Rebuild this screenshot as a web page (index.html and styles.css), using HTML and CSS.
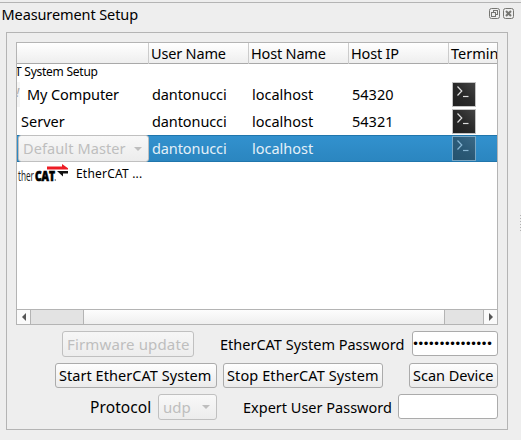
FILE: index.html
```html
<!DOCTYPE html>
<html lang="en">
<head>
<meta charset="utf-8">
<title>Measurement Setup</title>
<link rel="stylesheet" href="styles.css">
</head>
<body>
<svg width="0" height="0" class="defs">
  <defs>
    <linearGradient id="tg" x1="0" y1="1" x2="1" y2="0"><stop offset="0" stop-color="#202020"/><stop offset=".5" stop-color="#292929"/><stop offset="1" stop-color="#444"/></linearGradient>
    <symbol id="term" viewBox="0 0 24 25">
      <rect width="24" height="25" fill="#c3c3c3"/>
      <rect x="1" y="1" width="22" height="23" fill="url(#tg)"/>
      <path d="M5.5 4.5 L9.8 9 L5.5 13.5" fill="none" stroke="#ddd" stroke-width="1.2"/>
      <path d="M11 14.5H16.5" stroke="#ddd" stroke-width="1.2"/>
    </symbol>
  </defs>
</svg>
<div class="dock">
  <header class="title"><span class="t-title">Measurement Setup</span>
    <svg class="controls" width="26" height="12" viewBox="0 0 26 12" fill="none" stroke="#767672">
      <rect x=".5" y=".5" width="10" height="10" rx="2"/>
      <rect x="4.5" y="2.5" width="4" height="4"/><rect x="2.5" y="4.5" width="4" height="4" fill="#eee"/>
      <rect x="14.5" y=".5" width="10" height="10" rx="2"/>
      <path d="M17 3L22 8M22 3L17 8" stroke-width="2"/>
    </svg>
  </header>
  <main class="frame">
    <section class="table">
      <div class="row head"><div></div><div>User Name</div><div>Host Name</div><div>Host IP</div><div>Termin</div></div>
      <div class="row group"><div class="t-group">T System Setup</div></div>
      <div class="row item"><div class="computer"><i class="sliver">!</i><span class="t-comp">My Computer</span></div><div class="t-dan">dantonucci</div><div>localhost</div><div>54320</div><div><svg class="term"><use href="#term"/></svg></div></div>
      <div class="row item"><div class="server">Server</div><div class="t-dan">dantonucci</div><div>localhost</div><div>54321</div><div><svg class="term"><use href="#term"/></svg></div></div>
      <div class="row item selected"><div class="cell-combo"><div class="combo master"><span class="t-master">Default Master</span><i class="down"></i></div></div><div class="t-dan">dantonucci</div><div>localhost</div><div></div><div><svg class="term"><use href="#term"/></svg></div></div>
      <div class="row slave">
        <svg width="52" height="24" viewBox="0 0 52 24" class="logo">
          <text x="1" y="19" textLength="16" lengthAdjust="spacingAndGlyphs" class="ether">ther</text>
          <text x="18" y="19" textLength="20" lengthAdjust="spacingAndGlyphs" class="cat">CAT</text>
          <circle cx="38.3" cy="18" r=".8" fill="#555"/>
          <path d="M30 4.5H45V2L51 6.3V7.5H30Z" fill="#ed1c24"/>
          <path d="M51 9V11.5H46V14.5L40 9Z" fill="#111"/>
        </svg>
        <span class="t-slave">EtherCAT ...</span>
      </div>
      <div class="scroll"><div class="arrow"><i class="left"></i></div><div class="groove one"></div><div class="thumb"></div><div class="groove two"></div><div class="arrow end"><i class="right"></i></div></div>
    </section>
    <section class="controls-row first"><div class="button disabled firmware"><span>Firmware update</span></div><label class="t-syspass">EtherCAT System Password</label><div class="input pass"><span>•••••••••••••••</span></div></section>
    <section class="controls-row second"><div class="button start"><span>Start EtherCAT System</span></div><div class="button stop"><span>Stop EtherCAT System</span></div><div class="button scan"><span>Scan Device</span></div></section>
    <section class="controls-row third"><label class="t-proto">Protocol</label><div class="combo udp"><span>udp</span><i class="down"></i></div><label class="t-expert">Expert User Password</label><div class="input expert"></div></section>
  </main>
  <div class="grip"></div>
</div>
</body>
</html>
```
FILE: styles.css
```css
* { box-sizing: border-box; }
body { margin: 0; background: #eee; color: #000; font: 14.5px/20px "Noto Sans", sans-serif; white-space: nowrap; overflow: hidden; }
.defs { display: block; height: 0; }
.dock { position: relative; width: 521px; height: 440px; padding-top: 2px; }
.title { height: 30px; border-top: 1px solid #b4b4b4; padding: 1px 6px 0 1.5px; display: flex; justify-content: space-between; }
.t-title { letter-spacing: -.1px; }
.controls { margin-top: 4px; }
.frame { margin-left: 6px; width: 502px; height: 398px; border: 1px solid #b4b4b4; padding: 9px; }
.table { width: 482px; height: 283px; border: 1px solid #b4b4b4; background: #fff; overflow: hidden; display: flex; flex-direction: column; }
.row { display: grid; grid-template-columns: 132px 100px 100px 100px 48px; flex: none; }
.head { height: 21px; line-height: 21px; background: linear-gradient(#fff, #eee); border-bottom: 1px solid #a9a9a9; letter-spacing: -.18px; }
.head > div { border-right: 1px solid #ccc; padding-left: 2px; }
.head > div:last-child { border-right: 0; letter-spacing: 0; }
.group { height: 17px; font-size: 12px; line-height: 15px; }
.t-group { margin-left: -2px; letter-spacing: -.25px; }
.item { height: 27px; line-height: 26px; }
.item > div:not(:first-child) { padding-left: 3px; }
.item > div { height: 27px; }
.t-dan { letter-spacing: -.1px; }
.computer { display: flex; }
.t-comp { letter-spacing: -.1px; }
.sliver { width: 3px; height: 25px; margin: 1px 7px 0 0; background: #f6f6f6; color: #aaa; font-size: 13px; line-height: 20px; text-indent: -1px; overflow: hidden; }
.server { padding-left: 4px; }
.term { display: block; width: 24px; height: 25px; margin: 1px 0 0; }
.selected { background: linear-gradient(#3291ce, #2b86c0); border: solid #2076ac; border-width: 1px 0; color: #e4f0f8; }
.selected > div { margin-top: -1px; line-height: 27px; }
.selected .term { opacity: .5; }
.combo, .button, .input { border: 1px solid #ababab; border-radius: 3px; background: linear-gradient(#fefefe, #ebebeb); display: flex; align-items: center; }
.combo { border-color: #c0c0c0; background: linear-gradient(#f8f8f8, #ececec); color: #bebebe; justify-content: space-between; padding: 0 6px 0 5px; }
.master { margin-left: 1px; height: 27px; width: 131px; padding-left: 4px; }
.t-master { letter-spacing: .1px; }
.down { border: 4px solid transparent; border-top-color: #bebebe; border-bottom: 0; }
.slave { display: flex; height: 24px; }
.logo { flex: none; }
.ether { font: 14px "Open Sans", sans-serif; fill: #222; }
.cat { font: 800 14px "Open Sans", sans-serif; stroke: #000; stroke-width: .7px; }
.t-slave { font-size: 12px; line-height: 23px; margin-left: 7px; letter-spacing: .2px; }
.scroll { margin-top: auto; height: 15px; border-top: 1px solid #b4b4b4; display: flex; }
.arrow { width: 14px; border-right: 1px solid #b4b4b4; display: grid; place-items: center; background: #fafafa; }
.arrow.end { border-right: 0; border-left: 1px solid #b4b4b4; }
.left, .right { border: 4px solid transparent; }
.left { border-right-color: #555; border-left: 0; }
.right { border-left-color: #555; border-right: 0; }
.groove { background: #e3e3e3; }
.one { width: 52px; }
.two { width: 38px; }
.thumb { flex: 1; background: linear-gradient(#fdfdfd, #efefef); border: solid #b4b4b4; border-width: 0 1px; }
.controls-row { display: flex; }
.first { margin: 6px 0 0 46px; height: 26px; }
.second { margin: 6px 0 0 39px; height: 25px; }
.third { margin: 6px 0 0 74px; height: 26px; }
.button { padding: 0 0 1px 3px; }
.disabled { border-color: #c0c0c0; color: #bebebe; background: linear-gradient(#f6f6f6, #ededed); }
.firmware { width: 132px; margin-right: 26px; font-size: 15px; letter-spacing: .15px; padding-left: 4px; }
.start { width: 162px; margin-right: 6px; }
.start span { letter-spacing: .05px; }
.stop { width: 160px; margin-right: 26px; }
.stop span { letter-spacing: .1px; }
.scan { width: 89px; }
.input { background: #fff; height: 25px; }
.pass { margin-left: auto; width: 86px; overflow: hidden; }
.pass span { font: 12px "DejaVu Sans", sans-serif; letter-spacing: -1.8px; margin-left: -1px; }
.expert { margin-left: auto; width: 100px; }
.udp { width: 59px; margin: 0 26px 0 0; font-size: 15px; padding-left: 4px; }
label { line-height: 27px; }
.t-proto { width: 68px; font-size: 15.5px; letter-spacing: .1px; line-height: 26px; }
.t-syspass { width: 186px; }
.t-expert { width: 149px; }
.grip { position: absolute; left: 520px; top: 215px; width: 1px; height: 17px; background: repeating-linear-gradient(#b4b4b4 0 1px, transparent 1px 3px); }
```
